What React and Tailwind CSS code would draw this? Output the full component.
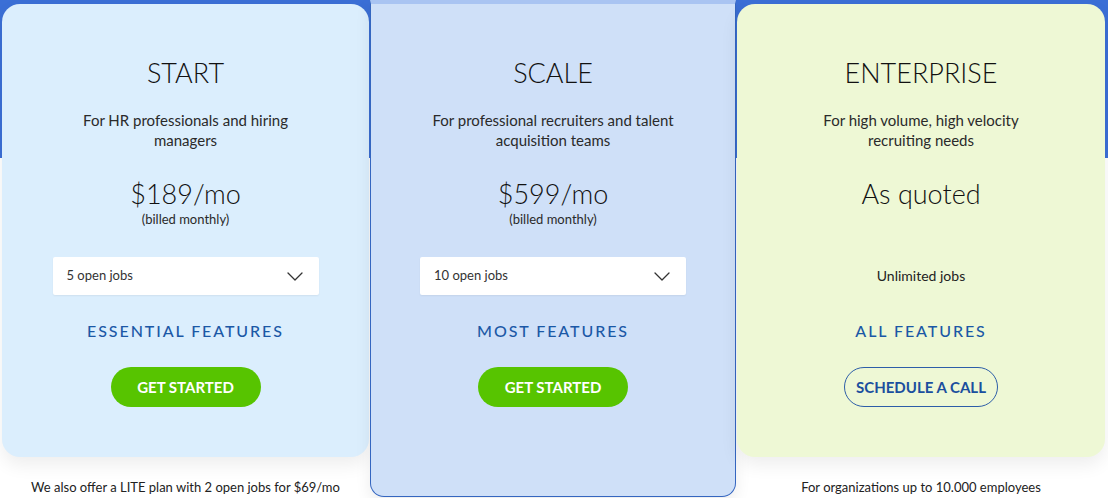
import React from "react";

function Chevron() {
  return (
    <svg width="16" height="9" viewBox="0 0 16 9" fill="none">
      <path d="M1 1l7 7 7-7" stroke="#333" strokeWidth="1.3" strokeLinecap="round" strokeLinejoin="round" />
    </svg>
  );
}

function Dropdown({ label }) {
  return (
    <div className="mt-[30px] w-[266px] h-[38px] bg-white rounded-[2px] flex items-center justify-between pl-[14px] pr-[16px] shadow-[0_1px_2px_rgba(0,0,0,0.06)]">
      <span className="text-[13px] text-[#333]">{label}</span>
      <Chevron />
    </div>
  );
}

function CardBody({ title, desc, descW, price, children, features, button }) {
  return (
    <>
      <div className="mt-[52px] text-[27px] leading-[34px] font-light text-[#111]">{title}</div>
      <div className={`mt-[20px] ${descW} text-[15px] leading-[20px] text-[#2a2a2a]`}>{desc}</div>
      <div className="mt-[27px] text-[27px] leading-[34px] font-light text-[#111]">{price}</div>
      {children}
      <div className="mt-[25px] text-[16px] leading-[22px] tracking-[0.12em] text-[#1b58a6] font-medium">{features}</div>
      {button}
    </>
  );
}

function GreenButton() {
  return (
    <div className="mt-[25px] w-[150px] h-[40px] rounded-full bg-[#57c400] flex items-center justify-center text-white text-[15px] font-bold">
      GET STARTED
    </div>
  );
}

export default function App() {
  return (
    <div
      className="w-[1108px] h-[498px] overflow-hidden bg-[linear-gradient(to_bottom,#3b6fd6_158px,#ffffff_158px)] flex px-[2px]"
      style={{ fontFamily: "Lato, 'Liberation Sans', sans-serif" }}
    >
      {/* Left column */}
      <div className="w-[367px] flex flex-col items-center">
        <div className="mt-[4px] w-[367px] h-[453px] rounded-[18px] bg-[#dbeefd] shadow-[0_8px_18px_rgba(0,0,0,0.07)] flex flex-col items-center text-center">
          <CardBody
            title="START"
            desc="For HR professionals and hiring managers"
            descW="w-[240px]"
            price="$189/mo"
            features="ESSENTIAL FEATURES"
            button={<GreenButton />}
          >
            <div className="text-[13px] leading-[16px] text-[#2a2a2a]">(billed monthly)</div>
            <Dropdown label="5 open jobs" />
          </CardBody>
        </div>
        <div className="mt-[20px] text-[13px] leading-[20px] text-[#222]">We also offer a LITE plan with 2 open jobs for $69/mo</div>
      </div>

      {/* Middle card */}
      <div className="ml-[1px] w-[366px] h-[497px] rounded-b-[14px] bg-[#cfe0f8] border-x border-b border-[#3566c0] border-t-[4px] border-t-[#a9c4f2] shadow-[0_6px_16px_rgba(0,0,0,0.08)] flex flex-col items-center text-center">
        <CardBody
          title="SCALE"
          desc="For professional recruiters and talent acquisition teams"
          descW="w-[260px]"
          price="$599/mo"
          features="MOST FEATURES"
          button={<GreenButton />}
        >
          <div className="text-[13px] leading-[16px] text-[#2a2a2a]">(billed monthly)</div>
          <Dropdown label="10 open jobs" />
        </CardBody>
      </div>

      {/* Right column */}
      <div className="ml-[1px] w-[368px] flex flex-col items-center">
        <div className="mt-[4px] w-[368px] h-[453px] rounded-[18px] bg-[#eef8d5] shadow-[0_8px_18px_rgba(0,0,0,0.07)] flex flex-col items-center text-center">
          <CardBody
            title="ENTERPRISE"
            desc="For high volume, high velocity recruiting needs"
            descW="w-[240px]"
            price="As quoted"
            features="ALL FEATURES"
            button={
              <div className="mt-[25px] w-[154px] h-[40px] rounded-full border border-[#2d5ea8] flex items-center justify-center text-[#1b4f9e] text-[15px] font-bold">
                SCHEDULE A CALL
              </div>
            }
          >
            <div className="h-[84px] flex items-end justify-center pb-[9px] text-[14px] leading-[20px] text-[#222]">Unlimited jobs</div>
          </CardBody>
        </div>
        <div className="mt-[20px] text-[13px] leading-[20px] text-[#222]">For organizations up to 10.000 employees</div>
      </div>
    </div>
  );
}
